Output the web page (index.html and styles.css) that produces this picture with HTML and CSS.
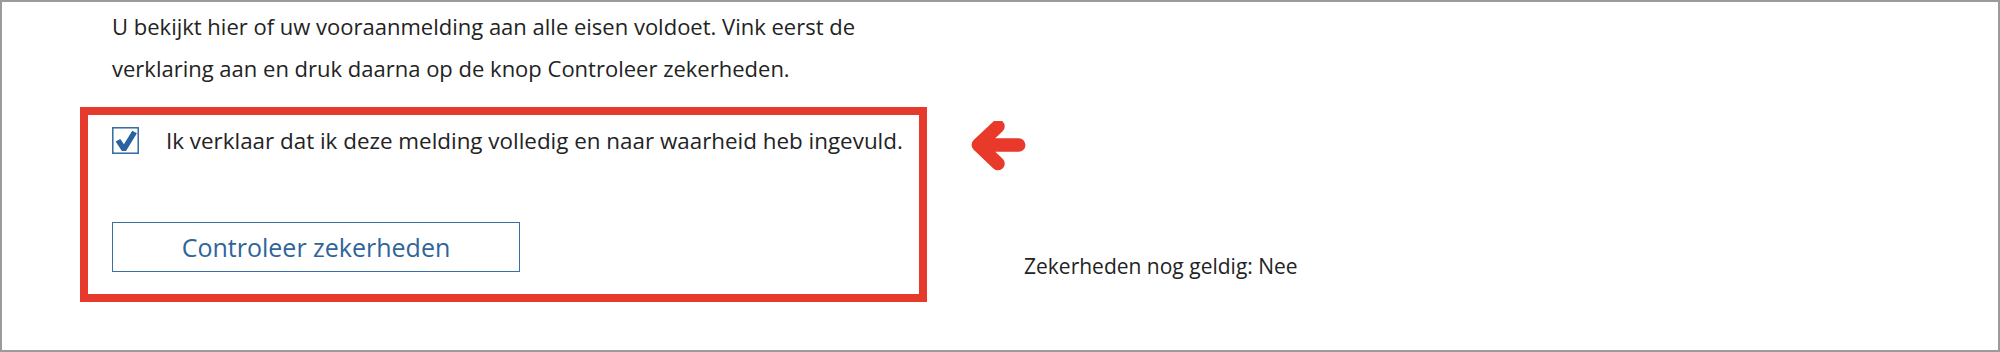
FILE: index.html
```html
<!DOCTYPE html>
<html>
  <head>
    <title>Controleer zekerheden</title>
    <link rel="stylesheet" href="styles.css">
  </head>
  <body>
    <div class="page">
      <p class="intro">
        U bekijkt hier of uw vooraanmelding aan alle eisen voldoet. Vink eerst de<br />
        verklaring aan en druk daarna op de knop Controleer zekerheden.
      </p>

      <div class="annotated">
        <!-- gemarkeerd blok -->
        <div class="highlight">
          <label class="check-row">
            <span class="checkbox">
              <svg width="27" height="27" viewBox="0 0 26 26">
                <rect x="0.75" y="0.75" width="24.5" height="24.5" fill="#fff" stroke="#3a6ea5" stroke-width="1.5" />
                <path d="M3.5 14 L8 11.5 L11.5 16.5 L19.5 3.5 L24 6 L13.5 23 L9.5 23 Z" fill="#2a62a0" />
              </svg>
            </span>
            <span class="check-label">Ik verklaar dat ik deze melding volledig en naar waarheid heb ingevuld.</span>
          </label>
          <button class="btn-outline">Controleer zekerheden</button>
        </div>

        <div class="side">
          <svg class="arrow" width="58" height="50" viewBox="0 0 56 48">
            <path d="M48 23 H10 M28 5 L9 23 L28 41" fill="none" stroke="#e8392b" stroke-width="13" stroke-linecap="round" stroke-linejoin="round" />
          </svg>
          <div class="status">Zekerheden nog geldig: Nee</div>
        </div>
      </div>
    </div>
  </body>
</html>
```

FILE: styles.css
```css
body {
  margin: 0;
  background: #fff;
  font-family: "Open Sans", "Noto Sans", sans-serif;
  color: #232323;
}
.page {
  width: 2000px;
  height: 352px;
  box-sizing: border-box;
  border: 2px solid #9b9b9b;
  padding: 3px 0 0 78px;
}
.intro {
  margin: 0 0 18px 32px;
  font-size: 22px;
  line-height: 42px;
}
.annotated {
  display: flex;
}
.highlight {
  width: 847px;
  box-sizing: border-box;
  border: 8px solid #e63a2c;
  padding: 12px 0 22px 24px;
}
.check-row {
  display: flex;
  align-items: center;
  gap: 27px;
  height: 27px;
  font-size: 22.4px;
}
.checkbox {
  display: block;
  width: 27px;
  height: 27px;
}
.checkbox svg {
  display: block;
}
.btn-outline {
  display: block;
  margin-top: 68px;
  width: 408px;
  height: 50px;
  background: #fff;
  border: 1.5px solid #3a6ea5;
  border-radius: 0;
  color: #2f6599;
  font-family: "Open Sans", "Noto Sans", sans-serif;
  font-size: 25px;
  padding: 0;
  cursor: pointer;
}
.side {
  display: flex;
  flex-direction: column;
  margin-left: 42px;
  padding: 14px 0 21px 0;
}
.arrow {
  display: block;
}
.status {
  margin-top: auto;
  margin-left: 55px;
  font-size: 21px;
  line-height: 30px;
}
```
